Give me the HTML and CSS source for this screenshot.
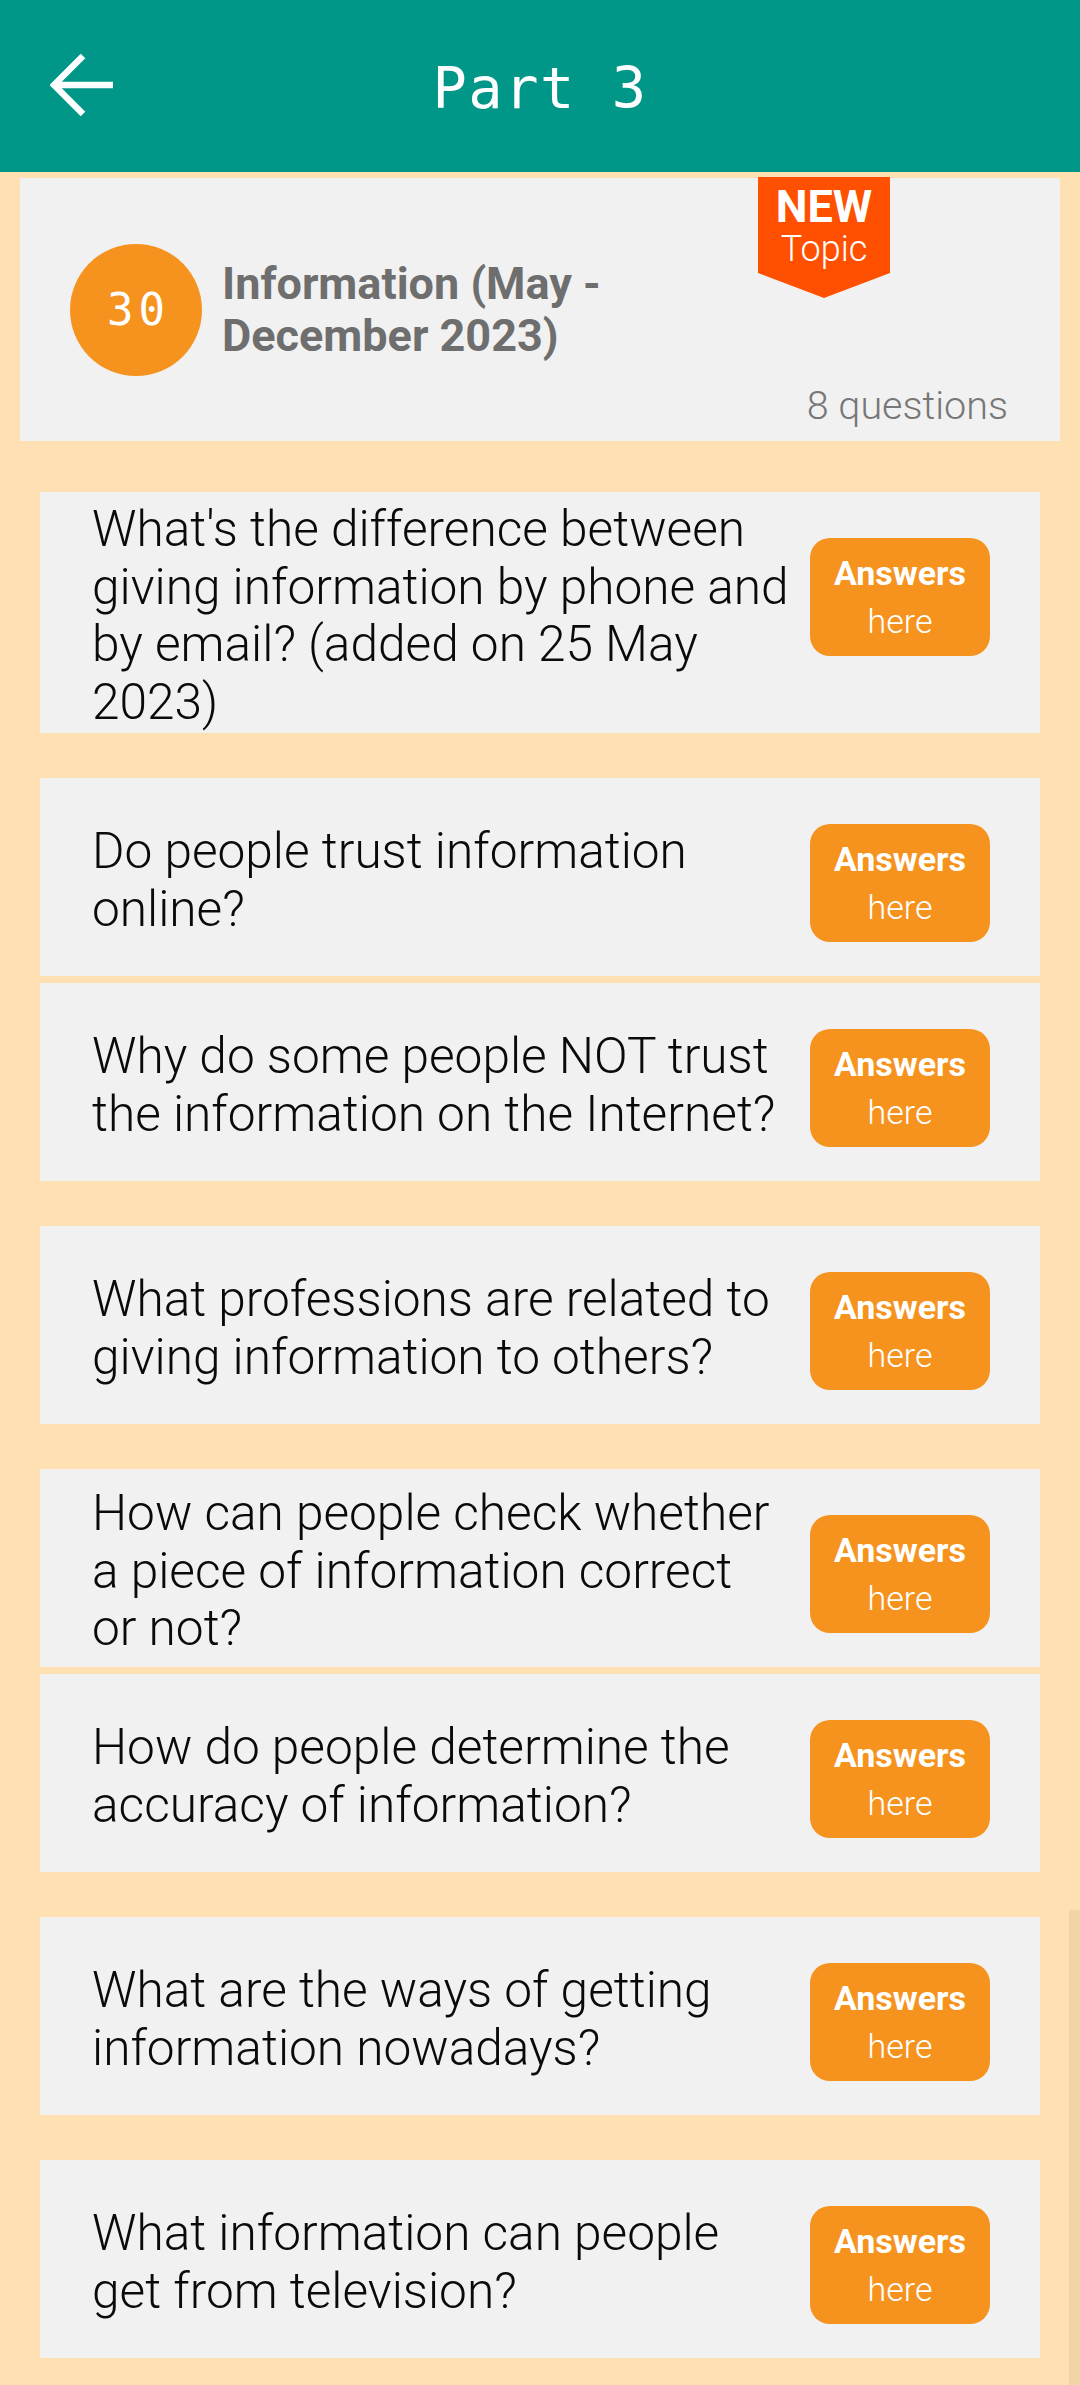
FILE: index.html
```html
<!DOCTYPE html>
<html lang="en">
<head>
<meta charset="utf-8">
<title>Part 3</title>
<link rel="stylesheet" href="styles.css">
</head>
<body>
<div class="app">
  <header class="topbar">
    <div class="back">
      <svg viewBox="0 0 64 64" width="64" height="64" aria-hidden="true">
        <path d="M63 32H6M33 3L4 32L33 61" fill="none" stroke="#fff" stroke-width="6.5"/>
      </svg>
    </div>
    <h1 class="title">Part 3</h1>
    <div></div>
  </header>

  <main class="content">
    <section class="topic">
      <div class="topic-main">
        <div class="num">30</div>
        <div class="topic-title">Information (May - December 2023)</div>
      </div>
      <div class="count">8 questions</div>
      <div class="badge"><span class="badge-new">NEW</span><span class="badge-topic">Topic</span></div>
    </section>

    <div class="q first">
      <div class="q-text">What's the difference between giving information by phone and by email? (added on 25 May 2023)</div>
      <div class="ans"><b>Answers</b><span>here</span></div>
    </div>
    <div class="q wide">
      <div class="q-text">Do people trust information online?</div>
      <div class="ans"><b>Answers</b><span>here</span></div>
    </div>
    <div class="q tight">
      <div class="q-text">Why do some people NOT trust the information on the Internet?</div>
      <div class="ans"><b>Answers</b><span>here</span></div>
    </div>
    <div class="q wide">
      <div class="q-text">What professions are related to giving information to others?</div>
      <div class="ans"><b>Answers</b><span>here</span></div>
    </div>
    <div class="q wide">
      <div class="q-text">How can people check whether a piece of information correct or&nbsp;not?</div>
      <div class="ans"><b>Answers</b><span>here</span></div>
    </div>
    <div class="q tight">
      <div class="q-text">How do people determine the accuracy of information?</div>
      <div class="ans"><b>Answers</b><span>here</span></div>
    </div>
    <div class="q wide">
      <div class="q-text">What are the ways of getting information nowadays?</div>
      <div class="ans"><b>Answers</b><span>here</span></div>
    </div>
    <div class="q wide">
      <div class="q-text">What information can people get from television?</div>
      <div class="ans"><b>Answers</b><span>here</span></div>
    </div>
  </main>
  <div class="scrollbar"></div>
</div>
</body>
</html>
```

FILE: styles.css
```css
html, body {
  margin: 0;
  padding: 0;
}

body {
  background: #ffe0b2;
  font-family: Roboto, "Noto Sans", sans-serif;
}

.app {
  position: relative;
  width: 1080px;
  height: 2385px;
  overflow: hidden;
  background: #ffe0b2;
}

/* Top bar */
.topbar {
  height: 172px;
  background: #009688;
  display: grid;
  grid-template-columns: 1fr auto 1fr;
  align-items: center;
}

.back {
  display: flex;
  padding-left: 50px;
}

.back svg {
  display: block;
  margin-top: -3px;
}

.title {
  margin: 0;
  padding-top: 4px;
  color: #ffffff;
  font-family: "DejaVu Sans Mono", "Liberation Mono", monospace;
  font-weight: 400;
  font-size: 57px;
  line-height: 1;
  letter-spacing: 1.5px;
}

/* Topic card */
.content {
  display: flex;
  flex-direction: column;
}

.topic {
  position: relative;
  margin: 6px 20px 0;
  height: 263px;
  background: #f1f1f1;
  display: grid;
}

.topic-main,
.count {
  grid-area: 1 / 1;
}

.topic-main {
  align-self: center;
  display: flex;
  align-items: center;
  gap: 20px;
  padding-left: 50px;
}

.num {
  width: 132px;
  height: 132px;
  flex: none;
  border-radius: 50%;
  background: #f6931f;
  color: #ffffff;
  display: flex;
  align-items: center;
  justify-content: center;
  box-sizing: border-box;
  padding-left: 5px;
  font-family: "DejaVu Sans Mono", "Liberation Mono", monospace;
  font-size: 44px;
  letter-spacing: 5px;
}

.topic-title {
  width: 420px;
  color: #6e6e6e;
  font-family: Roboto, sans-serif;
  font-weight: 700;
  font-size: 45px;
  line-height: 52px;
}

.count {
  justify-self: end;
  align-self: end;
  padding: 0 52px 12px 0;
  color: #777777;
  font-family: Roboto, sans-serif;
  font-weight: 300;
  font-size: 39.5px;
}

.badge {
  position: absolute;
  left: 738px;
  top: -1px;
  width: 132px;
  height: 121px;
  box-sizing: border-box;
  padding-top: 12px;
  background: #ff4f00;
  clip-path: polygon(0 0, 100% 0, 100% 96px, 50% 100%, 0 96px);
  display: flex;
  flex-direction: column;
  align-items: center;
  color: #ffffff;
  font-family: Roboto, sans-serif;
}

.badge-new {
  font-weight: 700;
  font-size: 45px;
  line-height: 36px;
}

.badge-topic {
  margin-top: 5px;
  font-weight: 300;
  font-size: 36px;
  line-height: 38px;
}

/* Question cards */
.q {
  margin: 0 40px;
  min-height: 198px;
  box-sizing: border-box;
  padding: 9px 0 2px;
  background: #f1f1f1;
  display: flex;
}

.q.first {
  margin-top: 51px;
}

.q.wide {
  margin-top: 45px;
}

.q.tight {
  margin-top: 7px;
}

.q-text {
  flex: 1;
  align-self: center;
  padding-left: 52px;
  color: #0a0a0a;
  font-family: Roboto, sans-serif;
  font-weight: 300;
  font-size: 49.6px;
  line-height: 57.5px;
}

.ans {
  flex: none;
  width: 180px;
  height: 118px;
  margin: 37px 50px 0 16px;
  border-radius: 20px;
  background: #f6931f;
  color: #ffffff;
  display: flex;
  flex-direction: column;
  align-items: center;
  justify-content: center;
  font-family: Roboto, sans-serif;
  font-size: 34px;
  line-height: 48px;
}

.ans b {
  font-weight: 700;
}

.ans span {
  font-weight: 300;
}

.scrollbar {
  position: absolute;
  right: 0;
  top: 1910px;
  width: 11px;
  height: 475px;
  background: #f1d5a9;
}
```
